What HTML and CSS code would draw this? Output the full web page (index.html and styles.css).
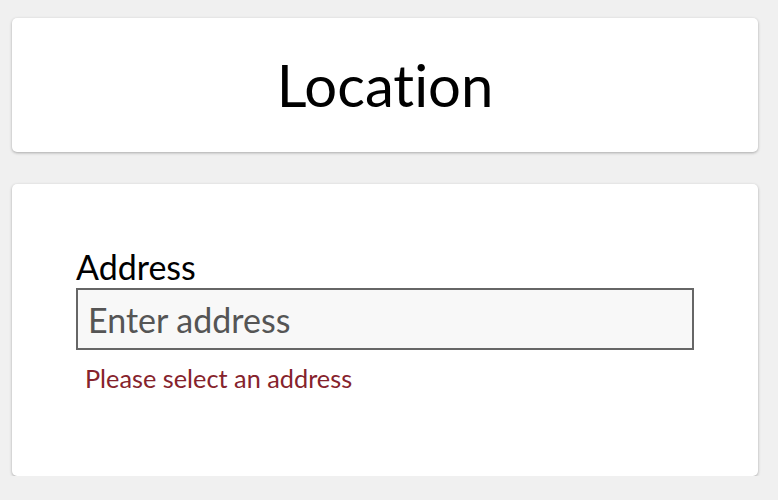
FILE: index.html
```html
<!DOCTYPE html>
<html>
<head>
<meta charset="utf-8">
<link rel="stylesheet" href="styles.css">
</head>
<body>
<main class="page">
  <section class="card header-card">
    <h1 class="title">Location</h1>
  </section>
  <section class="card form-card">
    <label class="field-label" for="address">Address</label>
    <input class="field-input" id="address" type="text" placeholder="Enter address">
    <p class="field-error">Please select an address</p>
  </section>
</main>
</body>
</html>
```
FILE: styles.css
```css
html, body {
  margin: 0;
  padding: 0;
  background: #f0f0f0;
}
body {
  font-family: Lato, "Noto Sans", sans-serif;
  font-variant-ligatures: none;
  color: #000;
}
.page {
  display: flex;
  flex-direction: column;
  gap: 32px;
  padding: 18px 20px 0 12px;
}
.card {
  background: #fff;
  border-radius: 5px;
  box-shadow: 0 1px 3px rgba(0, 0, 0, 0.3);
}
.header-card {
  height: 134px;
  display: flex;
  align-items: center;
  justify-content: center;
}
.title {
  margin: 0;
  font-weight: 400;
  font-size: 58px;
  line-height: 1;
}
.form-card {
  height: 292px;
  box-sizing: border-box;
  padding: 62px 64px 0 64px;
  display: flex;
  flex-direction: column;
}
.field-label {
  font-size: 34px;
  line-height: 42px;
}
.field-input {
  box-sizing: border-box;
  height: 62px;
  border: 2px solid #666;
  border-radius: 0;
  background: #f8f8f8;
  padding: 0 10px;
  font-family: Lato, "Noto Sans", sans-serif;
  font-variant-ligatures: none;
  font-size: 34px;
  color: #000;
  outline: none;
}
.field-input::placeholder {
  color: #555;
}
.field-error {
  margin: 12px 0 0 9px;
  font-size: 25.3px;
  line-height: 32px;
  color: #86232c;
}
```
